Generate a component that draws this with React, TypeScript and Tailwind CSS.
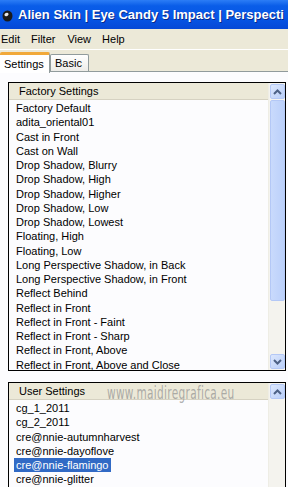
import React from "react";

const factory = [
  "Factory Default",
  "adita_oriental01",
  "Cast in Front",
  "Cast on Wall",
  "Drop Shadow, Blurry",
  "Drop Shadow, High",
  "Drop Shadow, Higher",
  "Drop Shadow, Low",
  "Drop Shadow, Lowest",
  "Floating, High",
  "Floating, Low",
  "Long Perspective Shadow, in Back",
  "Long Perspective Shadow, in Front",
  "Reflect Behind",
  "Reflect in Front",
  "Reflect in Front - Faint",
  "Reflect in Front - Sharp",
  "Reflect in Front, Above",
  "Reflect in Front, Above and Close",
];

const user = [
  "cg_1_2011",
  "cg_2_2011",
  "cre@nnie-autumnharvest",
  "cre@nnie-dayoflove",
  "cre@nnie-flamingo",
  "cre@nnie-glitter",
];

function Arrow({ up }: { up: boolean }) {
  return (
    <div className="w-[15px] h-[15px] rounded-[2px] border border-[#B4C8F6] bg-[linear-gradient(135deg,#DCE7FD,#B9CEF8)] flex items-center justify-center">
      <svg width="9" height="6" viewBox="0 0 9 6">
        <path
          d={up ? "M1 5 L4.5 1.5 L8 5" : "M1 1 L4.5 4.5 L8 1"}
          fill="none"
          stroke="#4D6185"
          strokeWidth="2"
        />
      </svg>
    </div>
  );
}

export default function App() {
  return (
    <div className="w-[288px] h-[487px] overflow-hidden bg-white relative font-['Liberation_Sans',Arial,sans-serif] text-[11px] text-black">
      {/* title bar */}
      <div className="h-[29px] overflow-hidden bg-[linear-gradient(180deg,#2C7DF6_0%,#0A5DE8_20%,#0656E6_60%,#0548D6_100%)] flex items-center pl-[2px] gap-[5px]">
        <svg width="11" height="13" viewBox="0 0 11 13" className="mt-[1px] shrink-0">
          <ellipse cx="5.5" cy="7" rx="5" ry="5.5" fill="#1a1a1a" />
          <ellipse cx="4.5" cy="5.5" rx="2.2" ry="1.6" fill="#e8e8e8" transform="rotate(-30 4.5 5.5)" />
        </svg>
        <span className="text-white font-bold text-[13px] whitespace-nowrap font-['Liberation_Sans',Arial,sans-serif] [text-shadow:1px_1px_0_#0A2A8A]">
          Alien Skin | Eye Candy 5 Impact | Perspecti
        </span>
      </div>
      {/* menu */}
      <div className="h-[20px] bg-[#ECE9D8] flex items-center">
        <span className="ml-[1px]">Edit</span>
        <span className="ml-[11px]">Filter</span>
        <span className="ml-[12px]">View</span>
        <span className="ml-[11px]">Help</span>
      </div>
      {/* tabs */}
      <div className="h-[23px] bg-[#ECE9D8] border-t border-white flex items-end relative">
        <div className="h-[21px] w-[50px] bg-white border-t-[3px] border-t-[#F1A93A] border-r border-r-[#919B9C] rounded-t-[2px] flex items-center pl-[4px] relative z-10 mb-[-1px]">
          Settings
        </div>
        <div className="h-[18px] w-[39px] bg-[linear-gradient(180deg,#FFFFFF,#ECEBE6)] border border-[#919B9C] border-b-0 rounded-t-[2px] flex items-center pl-[4px]">
          Basic
        </div>
        <div className="absolute left-0 right-0 bottom-0 h-px bg-[#919B9C]" />
      </div>
      {/* content */}
      <div className="pl-[8px] pr-[2px] pt-[10px] flex flex-col gap-[11px] bg-[#FCFCFE] h-full">
        {/* factory box */}
        <div className="h-[289px] border border-black flex">
          <div className="flex-1 flex flex-col">
            <div className="h-[17px] bg-[#ECE9D8] border-b border-[#D6D2C2] flex items-center pl-[10px]">
              Factory Settings
            </div>
            <div className="pt-[1px] pl-[7px] flex flex-col">
              {factory.map((f) => (
                <div key={f} className="h-[14.25px] leading-[14.25px] whitespace-nowrap">
                  {f}
                </div>
              ))}
            </div>
          </div>
          <div className="w-[17px] bg-[#F4F3EE] flex flex-col items-center pt-[1px] pb-[1px] border-l border-[#EEEDE5]">
            <Arrow up />
            <div className="w-[15px] h-[201px] mt-[1px] rounded-[2px] border border-[#B4C8F6] bg-[linear-gradient(90deg,#C9DAFC,#BBD0FA)]" />
            <div className="flex-1" />
            <Arrow up={false} />
          </div>
        </div>
        {/* user box */}
        <div className="h-[120px] border border-black flex relative">
          <div className="flex-1 flex flex-col">
            <div className="h-[17px] bg-[#ECE9D8] border-b border-[#D6D2C2] flex items-center pl-[10px]">
              User Settings
            </div>
            <div className="pt-[1px] pl-[5px] flex flex-col">
              {user.map((u) => (
                <div key={u} className="h-[14.25px] leading-[14.25px] whitespace-nowrap">
                  <span
                    className={
                      u === "cre@nnie-flamingo"
                        ? "bg-[#316AC5] text-white px-[2px] inline-block h-[14px] leading-[14px]"
                        : "px-[2px]"
                    }
                  >
                    {u}
                  </span>
                </div>
              ))}
            </div>
          </div>
          <div className="w-[17px] bg-[#F4F3EE] flex flex-col items-center pt-[1px] border-l border-[#EEEDE5]">
            <Arrow up />
          </div>
          <span className="absolute left-[98px] top-[-2px] text-[17px] text-[#8E8E8E]/70 font-['DejaVu_Sans',sans-serif] scale-x-[0.62] origin-left whitespace-nowrap tracking-[0.5px]">
            www.maidiregrafica.eu
          </span>
        </div>
      </div>
    </div>
  );
}
